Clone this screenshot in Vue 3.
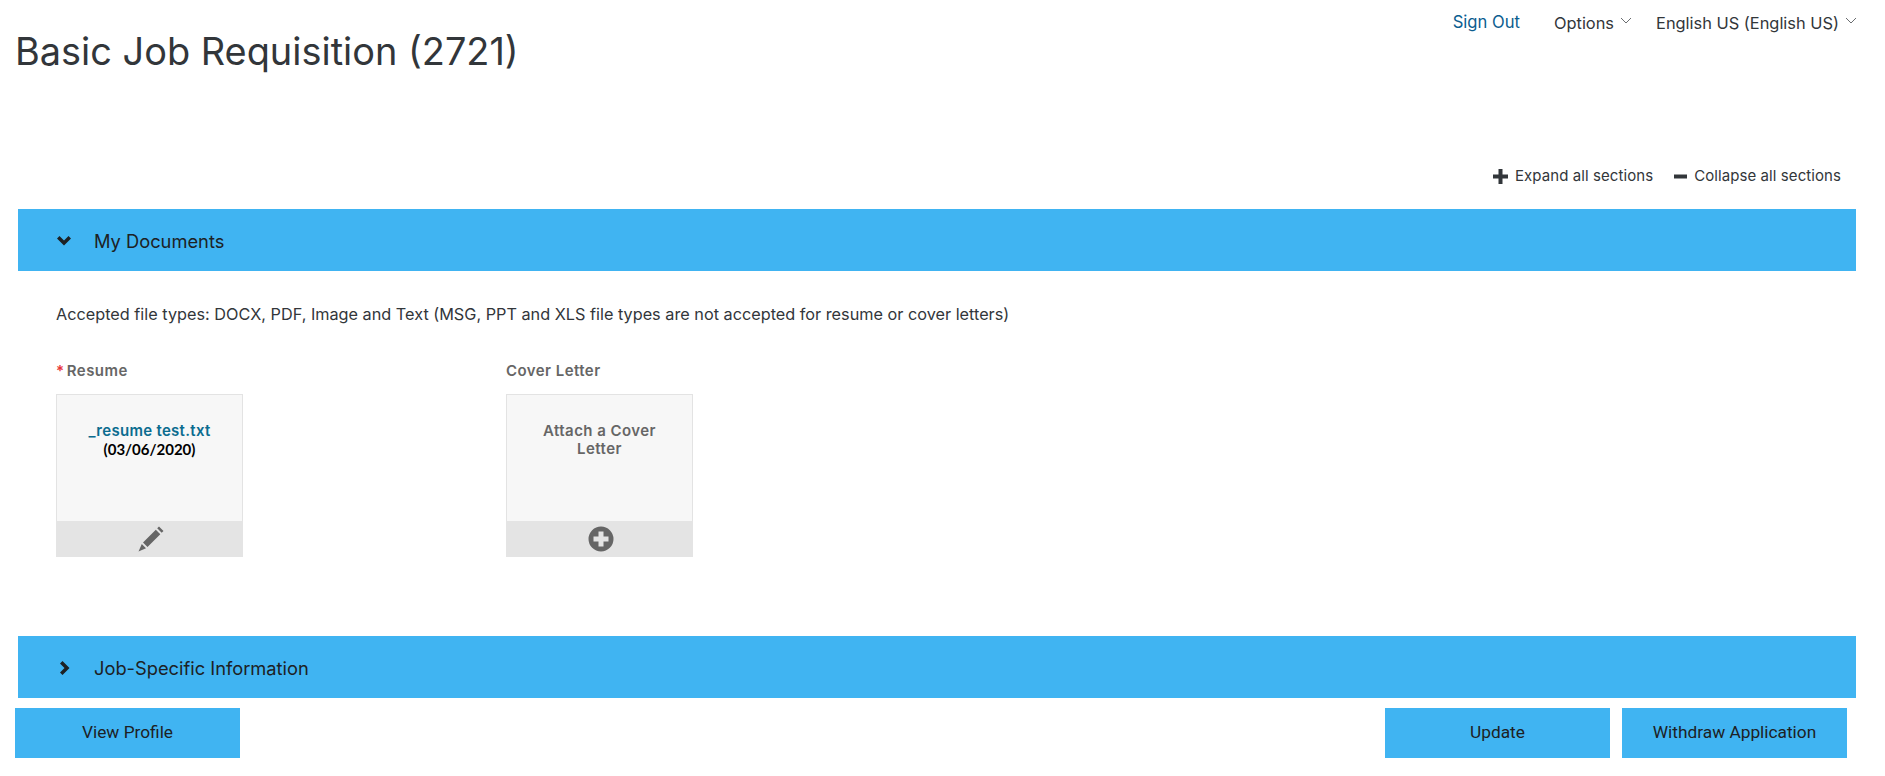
<script setup>
const footerLeft = 'View Profile'
const footerRight = ['Update', 'Withdraw Application']
</script>

<template>
  <div class="page">
    <header class="top">
      <h1 class="title">Basic Job Requisition (2721)</h1>
      <nav class="nav">
        <a class="signout">Sign Out</a>
        <span class="menu opt">Options
          <svg class="caret" viewBox="0 0 12 7"><path d="M1 1l5 5 5-5" fill="none" stroke="#6a6d70" stroke-width="1"/></svg>
        </span>
        <span class="menu">English US (English US)
          <svg class="caret" viewBox="0 0 12 7"><path d="M1 1l5 5 5-5" fill="none" stroke="#6a6d70" stroke-width="1"/></svg>
        </span>
      </nav>
    </header>

    <div class="tools">
      <span class="tool">
        <svg class="plus-ico" viewBox="0 0 15 15"><path d="M5.500 0h4v5.500H15v4H9.500V15h-4V9.500H0v-4h5.500z" fill="#32363a"/></svg>
        Expand all sections
      </span>
      <span class="tool">
        <svg class="minus-ico" viewBox="0 0 13 15"><path d="M0 5.500h13v4H0z" fill="#32363a"/></svg>
        Collapse all sections
      </span>
    </div>

    <section class="bar">
      <svg class="chev" viewBox="0 0 14 14"><path d="M0 4.500L2.500 2 7 6.500 11.500 2 14 4.500 7 11.500z" fill="#1d2124"/></svg>
      <span>My Documents</span>
    </section>

    <div class="docs">
      <p class="hint">Accepted file types: DOCX, PDF, Image and Text (MSG, PPT and XLS file types are not accepted for resume or cover letters)</p>
      <div class="doc-row">
        <div class="doc">
          <div class="doc-label"><span class="req">*</span> Resume</div>
          <div class="card">
            <div class="card-body">
              <div class="file">_resume test.txt</div>
              <div class="date">(03/06/2020)</div>
            </div>
            <div class="card-foot">
              <svg class="foot-ico" viewBox="0 0 26 26"><path d="M21 .5l4.500 4.500-1.800 1.800-4.500-4.500zM17.800 3.700l4.500 4.500L9.500 21l-4.500-4.500zM3.800 18l4.200 4.200L.5 25.500z" fill="#666"/></svg>
            </div>
          </div>
        </div>
        <div class="doc">
          <div class="doc-label">Cover Letter</div>
          <div class="card">
            <div class="card-body attach">Attach a Cover Letter</div>
            <div class="card-foot">
              <svg class="foot-ico" viewBox="0 0 26 26"><path fill-rule="evenodd" d="M13 .5a12.500 12.500 0 1 1 0 25 12.500 12.500 0 0 1 0-25zM10.500 5.500v5H5.500v5h5v5h5v-5h5v-5h-5v-5z" fill="#666"/></svg>
            </div>
          </div>
        </div>
      </div>
    </div>

    <section class="bar">
      <svg class="chev chev-right" viewBox="0 0 14 14"><path d="M4.500 0L2 2.500 6.500 7 2 11.500 4.500 14 11.500 7z" fill="#1d2124"/></svg>
      <span>Job-Specific Information</span>
    </section>

    <footer class="foot">
      <button class="btn">{{ footerLeft }}</button>
      <div class="foot-right">
        <button v-for="b in footerRight" :key="b" class="btn">{{ b }}</button>
      </div>
    </footer>
  </div>
</template>

<style scoped>
.page {
  width: 1885px;
  height: 776px;
  overflow: hidden;
  background: #fff;
  font-family: "Inter", "Noto Sans", sans-serif;
  color: #32363a;
}
.top {
  display: flex;
  justify-content: space-between;
  height: 159px;
}
.title {
  margin: 27px 0 0 15px;
  font-size: 37.9px;
  line-height: 48px;
  font-weight: 400;
  color: #32363a;
}
.nav {
  display: flex;
  align-items: flex-start;
  padding-top: 11px;
  font-size: 16.4px;
  line-height: 22px;
  padding-right: 28px;
}
.signout { color: #0b5d8f; margin-right: 34px; font-size: 16.6px; }
.menu { display: inline-flex; align-items: center; gap: 6px; margin-top: 1px; }
.opt { margin-right: 24px; }
.caret { width: 12px; height: 7px; margin-bottom: 6px; }
.tools {
  display: flex;
  justify-content: flex-end;
  gap: 21px;
  height: 50px;
  padding-right: 44px;
  padding-top: 7px;
  box-sizing: border-box;
  font-size: 15px;
  letter-spacing: .08px;
  line-height: 20px;
}
.tool { display: inline-flex; align-items: center; gap: 7px; height: 20px; }
.plus-ico { width: 15px; height: 15px; }
.minus-ico { width: 13px; height: 15px; }
.bar {
  margin: 0 29px 0 18px;
  height: 62px;
  box-sizing: border-box;
  background: #40b4f2;
  display: flex;
  align-items: center;
  color: #1d2124;
  font-size: 18.3px;
  padding: 2px 0 0 39px;
}
.chev { width: 14px; height: 14px; margin-right: 23px; }
.chev-right { margin: 0 22px 0 1px; }
.docs { height: 365px; padding: 32px 0 0 56px; box-sizing: border-box; }
.hint { margin: 0 0 36px; font-size: 16.25px; line-height: 22px; color: #32363a; }
.doc-row { display: flex; gap: 263px; }
.doc { width: 187px; }
.doc-label {
  font-weight: 600;
  font-size: 15px;
  letter-spacing: .45px;
  line-height: 20px;
  color: #666;
  margin-bottom: 13px;
}
.req { color: #e8343a; margin-right: -2px; }
.card {
  height: 163px;
  box-sizing: border-box;
  border: 1px solid #e3e3e3;
  background: #f7f7f7;
  display: flex;
  flex-direction: column;
}
.card-body {
  flex: 1;
  padding: 27px 20px 0;
  text-align: center;
  font-weight: 600;
  font-size: 15px;
  letter-spacing: .45px;
  line-height: 18px;
}
.file { color: #0b6c8f; white-space: nowrap; margin: 0 -10px; letter-spacing: .3px; }
.date { color: #000; font-family: "Lato", sans-serif; font-weight: 700; letter-spacing: 0; }
.attach { color: #666; }
.card-foot {
  height: 36px;
  margin: 0 -1px -1px;
  background: #e4e4e4;
  display: flex;
  align-items: center;
  justify-content: center;
}
.foot-ico { width: 26px; height: 26px; margin-left: 2px; }
.foot {
  display: flex;
  justify-content: space-between;
  margin-top: 10px;
  padding: 0 38px 0 15px;
}
.foot-right { display: flex; gap: 12px; }
.btn {
  width: 225px;
  height: 50px;
  border: 0;
  background: #40b4f2;
  color: #1d2124;
  font-family: "Roboto", sans-serif;
  font-size: 17.3px;
  padding: 0 0 2px;
}
</style>
